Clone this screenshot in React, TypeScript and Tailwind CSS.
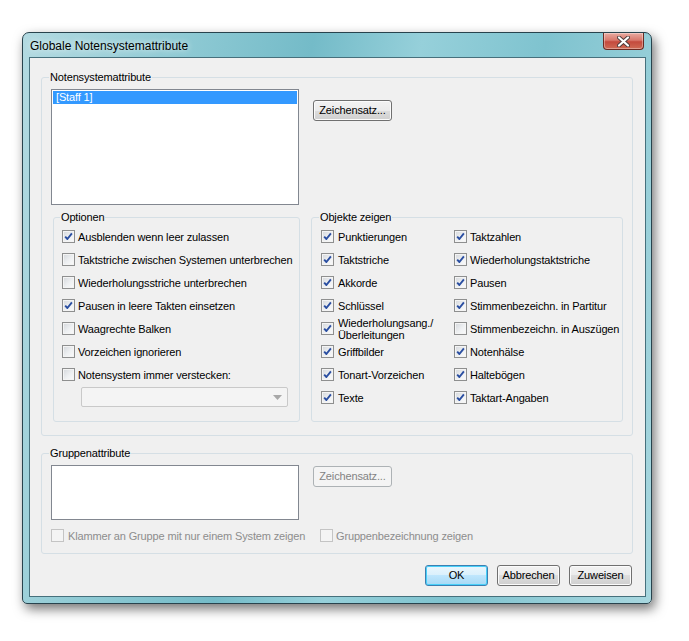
import React from "react";

const font = "font-['Liberation_Sans',Arial,sans-serif]";

function Check({ on, disabled }: { on?: boolean; disabled?: boolean }) {
    return (
        <div
            className={
                "flex h-[13px] w-[13px] shrink-0 items-center justify-center border " +
                (disabled
                    ? "border-[#c4c4c4] bg-[#f4f4f4]"
                    : "border-[#8e8f8f] bg-[linear-gradient(135deg,#d4d7db_0%,#eef0f2_55%,#fbfbfb_100%)] shadow-[inset_0_0_0_1px_#f4f4f4]")
            }
        >
            {on && (
                <svg width="9" height="9" viewBox="0 0 9 9">
                    <path d="M1.2 4.6 L3.4 7 L7.9 1.4" fill="none" stroke="#2a4ea1" strokeWidth="1.9" strokeLinejoin="round" />
                </svg>
            )}
        </div>
    );
}

function Row({ label, on, gap = "gap-[3px]", disabled }: { label: React.ReactNode; on?: boolean; gap?: string; disabled?: boolean }) {
    return (
        <div className={"flex h-[23px] items-center " + gap}>
            <Check on={on} disabled={disabled} />
            <span className={"whitespace-nowrap leading-[12px] " + (disabled ? "text-[#8d8d8d]" : "text-black")}>{label}</span>
        </div>
    );
}

function Button({ children, w = "w-[79px]", primary, disabled }: { children: React.ReactNode; w?: string; primary?: boolean; disabled?: boolean }) {
    let cls = "border-[#707070] bg-[linear-gradient(#f2f2f2_0%,#ebebeb_50%,#dddddd_50%,#cfcfcf_100%)] text-black shadow-[inset_0_0_0_1px_#fbfbfb]";
    if (primary) cls = "border-[#3c7fb1] bg-[linear-gradient(#eaf6fd_0%,#d9f0fc_50%,#bee6fd_50%,#a7d9f5_100%)] text-black shadow-[inset_0_0_0_1px_#48d0f9]";
    if (disabled) cls = "border-[#adb2b5] bg-[#f4f4f4] text-[#838383]";
    return (
        <div className={"flex h-[21px] shrink-0 items-center justify-center rounded-[3px] border " + w + " " + cls}>
            {children}
        </div>
    );
}

function Legend({ children }: { children: React.ReactNode }) {
    return <legend className="ml-[-2px] px-[1px] text-[11px] leading-[13px] text-black">{children}</legend>;
}

const optionen: [string, boolean][] = [
    ["Ausblenden wenn leer zulassen", true],
    ["Taktstriche zwischen Systemen unterbrechen", false],
    ["Wiederholungsstriche unterbrechen", false],
    ["Pausen in leere Takten einsetzen", true],
    ["Waagrechte Balken", false],
    ["Vorzeichen ignorieren", false],
    ["Notensystem immer verstecken:", false],
];

const objekte: [React.ReactNode, boolean][] = [
    ["Punktierungen", true],
    ["Taktzahlen", true],
    ["Taktstriche", true],
    ["Wiederholungstaktstriche", true],
    ["Akkorde", true],
    ["Pausen", true],
    ["Schlüssel", true],
    ["Stimmenbezeichn. in Partitur", true],
    [<>Wiederholungsang./<br />Überleitungen</>, true],
    ["Stimmenbezeichn. in Auszügen", false],
    ["Griffbilder", true],
    ["Notenhälse", true],
    ["Tonart-Vorzeichen", true],
    ["Haltebögen", true],
    ["Texte", true],
    ["Taktart-Angaben", true],
];

export default function App() {
    return (
        <div className={"h-[641px] w-[689px] bg-white pl-[22px] pt-[32px] text-[11px] tracking-[-0.15px] " + font}>
            <div className="flex h-[572px] w-[630px] flex-col rounded-t-[7px] rounded-b-[5px] border border-[#28434d] bg-[linear-gradient(100deg,#b3dae1_0%,#8fcad4_22%,#74bbc8_40%,#96d0da_55%,#7fc3cf_72%,#a8d7df_100%)] pb-[6px] pl-[6px] pr-[5px] shadow-[3px_5px_12px_rgba(0,0,0,0.55)]">
                {/* title bar */}
                <div className="flex h-[24px] shrink-0 items-start justify-between">
                    <span className="ml-[1px] mt-[6px] text-[12px] leading-[14px] tracking-normal text-black [text-shadow:0_0_6px_rgba(255,255,255,0.95)]">
                        Globale Notensystemattribute
                    </span>
                    <div className="mr-[2px] flex h-[17px] w-[41px] items-center justify-center rounded-b-[4px] border border-t-0 border-[#6b2a22] bg-[linear-gradient(#e9aba1_0%,#d8786c_45%,#c44a3d_55%,#cf6b55_100%)] shadow-[inset_0_0_0_1px_rgba(255,255,255,0.35)]">
                        <svg width="13" height="11" viewBox="0 0 13 11">
                            <path d="M2 1.5 L11 9.5 M11 1.5 L2 9.5" stroke="#4a3b3b" strokeWidth="4" strokeLinecap="round" />
                            <path d="M2 1.5 L11 9.5 M11 1.5 L2 9.5" stroke="#ffffff" strokeWidth="2.2" strokeLinecap="round" />
                        </svg>
                    </div>
                </div>

                {/* client */}
                <div className="flex flex-1 flex-col border border-[#46707c] bg-[#f0f0f0] pl-[11px] pr-[12px] pt-[13px]">
                    <fieldset className="w-[592px] rounded-[3px] border border-[#d5dfe5] px-[9px] pb-[13px] pt-[5px]">
                        <Legend>Notensystemattribute</Legend>
                        <div className="flex">
                            <div className="h-[116px] w-[248px] border border-[#828790] bg-white p-[1px]">
                                <div className="h-[13px] bg-[#3399ff] pl-[3px] leading-[13px] text-white">[Staff 1]</div>
                            </div>
                            <div className="ml-[14px] mt-[11px]">
                                <Button>Zeichensatz...</Button>
                            </div>
                        </div>
                        <div className="ml-[2px] mt-[6px] flex gap-[11px]">
                            <fieldset className="w-[247px] rounded-[3px] border border-[#d5dfe5] pb-[12px] pl-[8px] pt-[1px]">
                                <Legend>Optionen</Legend>
                                {optionen.map(([l, on]) => (
                                    <Row key={l} label={l} on={on} />
                                ))}
                                <div className="ml-[19px] mt-[1px] flex h-[20px] w-[207px] items-center justify-end rounded-[2px] border border-[#c9c9c9] bg-[#f4f4f4] pr-[5px]">
                                    <svg width="9" height="5" viewBox="0 0 9 5">
                                        <path d="M0 0 H9 L4.5 5 Z" fill="#a8a8a8" />
                                    </svg>
                                </div>
                            </fieldset>
                            <fieldset className="w-[312px] rounded-[3px] border border-[#d5dfe5] pb-[12px] pl-[9px] pt-[1px]">
                                <Legend>Objekte zeigen</Legend>
                                <div className="grid grid-cols-[133px_1fr]">
                                    {objekte.map(([l, on], i) => (
                                        <Row key={i} label={l} on={on} gap={i % 2 === 0 ? "gap-[4px]" : "gap-[3px]"} />
                                    ))}
                                </div>
                            </fieldset>
                        </div>
                    </fieldset>

                    <fieldset className="mt-[11px] w-[592px] rounded-[3px] border border-[#d5dfe5] px-[9px] pb-[6px] pt-[5px]">
                        <Legend>Gruppenattribute</Legend>
                        <div className="flex">
                            <div className="h-[55px] w-[248px] border border-[#828790] bg-white" />
                            <div className="ml-[14px] mt-[1px]">
                                <Button disabled>Zeichensatz...</Button>
                            </div>
                        </div>
                        <div className="mt-[4px] flex">
                            <div className="w-[269px]">
                                <Row label="Klammer an Gruppe mit nur einem System zeigen" disabled gap="gap-[4px]" />
                            </div>
                            <Row label="Gruppenbezeichnung zeigen" disabled gap="gap-[3px]" />
                        </div>
                    </fieldset>

                    <div className="mr-[1px] mt-[11px] flex justify-end gap-[9px]">
                        <Button w="w-[63px]" primary>OK</Button>
                        <Button w="w-[63px]">Abbrechen</Button>
                        <Button w="w-[63px]">Zuweisen</Button>
                    </div>
                </div>
            </div>
        </div>
    );
}
